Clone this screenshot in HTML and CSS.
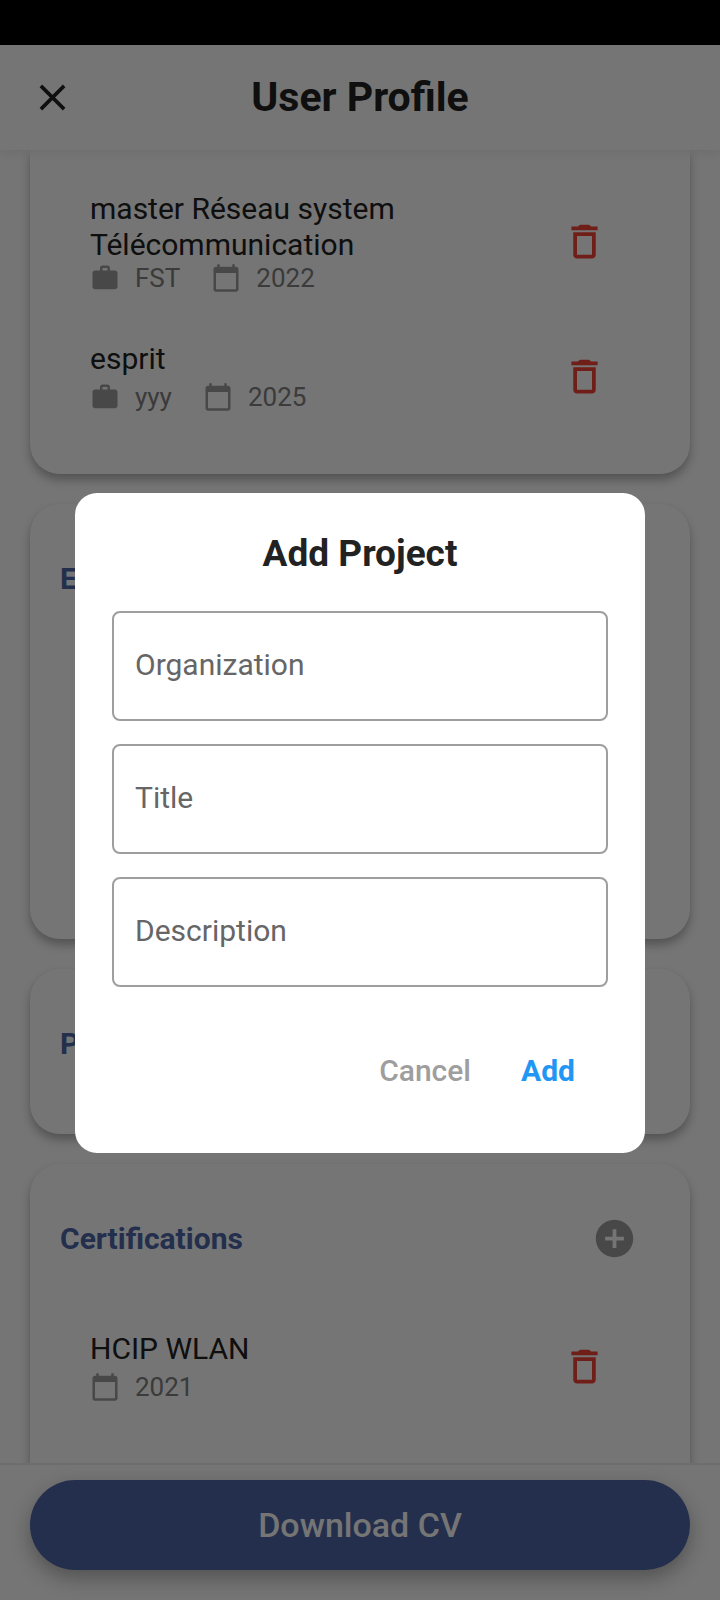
FILE: index.html
```html
<!DOCTYPE html>
<html lang="en">
<head>
<meta charset="utf-8">
<meta name="viewport" content="width=device-width, initial-scale=1">
<title>User Profile</title>
<link rel="stylesheet" href="styles.css">
</head>
<body>
<svg class="sprite" aria-hidden="true">
  <symbol id="close" viewBox="0 0 24 24"><path d="M5.8 5.8 18.200 18.200M18.200 5.800 5.800 18.200" fill="none" stroke="currentColor" stroke-width="1.900"/></symbol>
  <symbol id="work" viewBox="0 0 24 24"><path d="M20 6h-4V4c0-1.11-.89-2-2-2h-4c-1.11 0-2 .89-2 2v2H4c-1.11 0-1.99.89-1.99 2L2 19c0 1.11.89 2 2 2h16c1.11 0 2-.89 2-2V8c0-1.11-.89-2-2-2zm-6 0h-4V4h4v2z"/></symbol>
  <symbol id="calendar" viewBox="0 0 24 24"><path d="M20 3h-1V1h-2v2H7V1H5v2H4c-1.1 0-2 .9-2 2v16c0 1.1.9 2 2 2h16c1.1 0 2-.9 2-2V5c0-1.1-.9-2-2-2zm0 18H4V8h16v13z"/></symbol>
  <symbol id="trash" viewBox="0 0 24 24"><path d="M6 19c0 1.1.9 2 2 2h8c1.1 0 2-.9 2-2V7H6v12zM8 9h8v10H8V9zm7.5-5-.7-.7q-.3-.3-.7-.3H9.900q-.4 0-.7.300L8.500 4H5v2h14V4h-3.500z"/></symbol>
  <symbol id="plus" viewBox="0 0 24 24"><path d="M12 2C6.480 2 2 6.480 2 12s4.480 10 10 10 10-4.480 10-10S17.520 2 12 2zm5 11h-4v4h-2v-4H7v-2h4V7h2v4h4v2z"/></symbol>
</svg>

<div class="app">
  <div class="status-bar"></div>

  <header class="app-bar">
    <button class="icon-button close" type="button" aria-label="Close"><svg class="icon"><use href="#close"/></svg></button>
    <h1 class="app-title">User Profile</h1>
  </header>

  <main class="sections">
    <section class="card card-continued" aria-label="Education">
      <ul class="entries">
        <li class="entry">
          <div class="entry-text">
            <h3 class="entry-title">master Réseau system Télécommunication</h3>
            <div class="meta">
              <span class="meta-item"><svg class="icon-small"><use href="#work"/></svg>FST</span>
              <span class="meta-item"><svg class="icon-small"><use href="#calendar"/></svg>2022</span>
            </div>
          </div>
          <button class="icon-button delete" type="button" aria-label="Delete"><svg class="icon"><use href="#trash"/></svg></button>
        </li>
        <li class="entry">
          <div class="entry-text">
            <h3 class="entry-title">esprit</h3>
            <div class="meta meta-spaced">
              <span class="meta-item"><svg class="icon-small"><use href="#work"/></svg>yyy</span>
              <span class="meta-item"><svg class="icon-small"><use href="#calendar"/></svg>2025</span>
            </div>
          </div>
          <button class="icon-button delete" type="button" aria-label="Delete"><svg class="icon"><use href="#trash"/></svg></button>
        </li>
      </ul>
    </section>

    <section class="card">
      <div class="card-header"><h2 class="card-title">Experience</h2></div>
      <div class="entries entries-two"></div>
    </section>

    <section class="card">
      <div class="card-header"><h2 class="card-title">Projects</h2></div>
    </section>

    <section class="card">
      <div class="card-header">
        <h2 class="card-title">Certifications</h2>
        <button class="icon-button add" type="button" aria-label="Add certification"><svg class="icon"><use href="#plus"/></svg></button>
      </div>
      <ul class="entries entries-two">
        <li class="entry">
          <div class="entry-text">
            <h3 class="entry-title">HCIP WLAN</h3>
            <div class="meta meta-spaced">
              <span class="meta-item"><svg class="icon-small"><use href="#calendar"/></svg>2021</span>
            </div>
          </div>
          <button class="icon-button delete" type="button" aria-label="Delete"><svg class="icon"><use href="#trash"/></svg></button>
        </li>
      </ul>
    </section>
  </main>

  <footer class="bottom-bar">
    <button class="download" type="button">Download CV</button>
  </footer>
</div>

<div class="scrim">
  <form class="dialog" role="dialog" aria-modal="true" aria-labelledby="dialog-title">
    <h2 class="dialog-title" id="dialog-title">Add Project</h2>
    <div class="fields">
      <input class="field" type="text" name="organization" placeholder="Organization" aria-label="Organization">
      <input class="field" type="text" name="title" placeholder="Title" aria-label="Title">
      <input class="field" type="text" name="description" placeholder="Description" aria-label="Description">
    </div>
    <div class="actions">
      <button class="action cancel" type="button">Cancel</button>
      <button class="action confirm" type="button">Add</button>
    </div>
  </form>
</div>
</body>
</html>
```
FILE: styles.css
```css
* {
  box-sizing: border-box;
  margin: 0;
}

body {
  font-family: Roboto, "Liberation Sans", sans-serif;
  color: #222;
  background: #fefefe;
}

button,
input {
  font: inherit;
  color: inherit;
}

button {
  padding: 0;
  border: 0;
  background: none;
  cursor: pointer;
}

.sprite {
  display: none;
}

.icon,
.icon-small {
  display: block;
  flex: none;
  fill: currentColor;
}

.icon {
  width: 45px;
  height: 45px;
}

.icon-small {
  width: 30px;
  height: 30px;
  color: #9e9e9e;
}

.app {
  display: flex;
  flex-direction: column;
  height: 100vh;
}

.status-bar {
  flex: none;
  height: 45px;
  background: #000;
}

/* App bar */
.app-bar {
  z-index: 1;
  flex: none;
  display: grid;
  grid-template-columns: 45px 1fr 45px;
  align-items: center;
  height: 105px;
  padding: 0 30px;
  background: #fff;
  box-shadow: 0 2px 10px rgba(0, 0, 0, 0.08);
}

.app-title {
  padding-bottom: 2px;
  font-size: 41px;
  line-height: 48px;
  font-weight: 700;
  text-align: center;
}

/* Profile sections */
.sections {
  flex: 1;
  min-height: 0;
  overflow: hidden;
  display: flex;
  flex-direction: column;
  gap: 30px;
  padding: 0 30px;
}

.card {
  flex: none;
  padding: 30px;
  border-radius: 30px;
  background: #fff;
  box-shadow: 0 6px 10px rgba(0, 0, 0, 0.28), 0 0 2px rgba(0, 0, 0, 0.05);
}

.card-continued {
  padding-top: 24px;
  border-radius: 0 0 30px 30px;
}

.card-header {
  display: flex;
  align-items: center;
  justify-content: space-between;
  height: 90px;
  margin-bottom: 15px;
}

.card-title {
  font-size: 30px;
  line-height: 36px;
  font-weight: 700;
  color: #4c66a7;
}

.add {
  padding: 22px 23px 23px 22px;
  color: #9e9e9e;
}

.entries {
  padding: 0;
  list-style: none;
}

.entries-two {
  min-height: 270px;
}

.entry {
  display: flex;
  align-items: center;
  gap: 60px;
  min-height: 135px;
  padding: 0 53px 0 30px;
}

.entry-text {
  flex: 1;
  min-width: 0;
}

.entry-title {
  font-size: 30px;
  line-height: 36px;
  font-weight: 400;
}

.meta {
  display: flex;
  gap: 31px;
}

.meta-spaced {
  margin-top: 5px;
}

.meta-item {
  display: flex;
  align-items: center;
  gap: 15px;
  font-size: 26px;
  line-height: 30px;
  color: #808080;
}

.delete {
  color: #f44336;
}

/* Bottom bar */
.bottom-bar {
  z-index: 1;
  flex: none;
  padding: 15px 30px 30px;
  border-top: 2px solid #ededed;
  background: #fefefe;
}

.download {
  width: 100%;
  height: 90px;
  border-radius: 45px;
  background: #4c66a7;
  box-shadow: 0 8px 20px rgba(0, 0, 0, 0.3);
  color: #fff;
  font-size: 34px;
  font-weight: 500;
}

/* Dialog */
.scrim {
  position: fixed;
  inset: 0;
  z-index: 2;
  display: grid;
  align-items: center;
  padding: 45px 75px 0;
  background: rgba(0, 0, 0, 0.54);
}

.dialog {
  padding: 38px 37px;
  border-radius: 22px;
  background: #fff;
}

.dialog-title {
  margin-bottom: 34px;
  font-size: 37px;
  line-height: 46px;
  font-weight: 700;
  text-align: center;
}

.fields {
  display: flex;
  flex-direction: column;
  gap: 23px;
}

.field {
  width: 100%;
  height: 110px;
  padding: 0 21px 2px;
  border: 2px solid #9e9e9e;
  border-radius: 8px;
  background: #fff;
  font-size: 30px;
}

.field::placeholder {
  color: #666;
  opacity: 1;
}

.actions {
  display: flex;
  justify-content: flex-end;
  margin-top: 38px;
}

.action {
  min-width: 120px;
  height: 90px;
  padding: 2px 17px 0;
  font-size: 30px;
  font-weight: 500;
}

.cancel {
  color: #9e9e9e;
}

.confirm {
  color: #2196f3;
  font-weight: 700;
}
```
